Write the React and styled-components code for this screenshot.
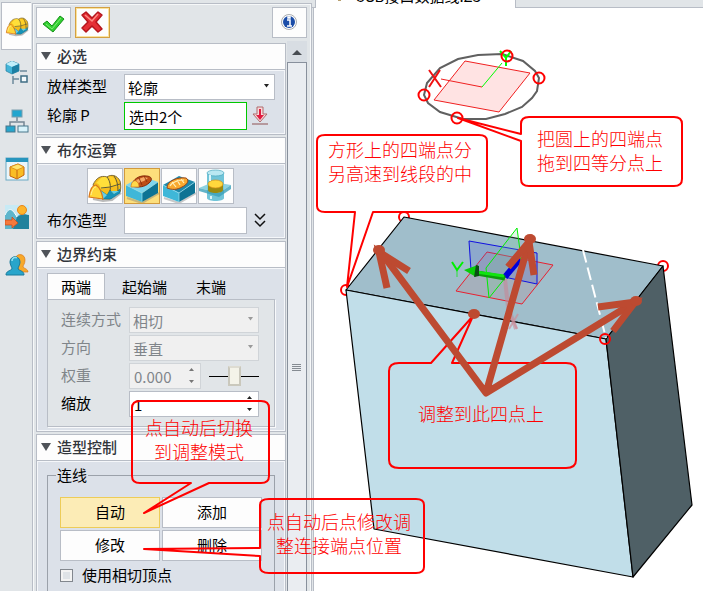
import React, { useState } from "react";
import styled, { createGlobalStyle, css } from "styled-components";

const colors = {
  chrome: "#e1e5e8",
  panel: "#dce1e9",
  line: "#b8bdc6",
  white: "#fdfdfd",
  red: "#ff0000",
  arrow: "#bd4a31",
};

const GlobalStyle = createGlobalStyle`
  * {
    box-sizing: border-box;
  }

  body {
    margin: 0;
    background: #ffffff;
    overflow: hidden;
  }

  body, button, input, select {
    font-family: "Noto Sans CJK SC", "Noto Sans", sans-serif;
    font-size: 15px;
    color: #000000;
  }

  button {
    padding: 0;
    cursor: pointer;
  }
`;

const Page = styled.div`
  position: relative;
  display: flex;
  height: 100vh;
  overflow: hidden;
  background: ${colors.chrome};
`;

const SideBar = styled.nav`
  flex: 0 0 32px;
  display: flex;
  flex-direction: column;
  padding: 2px 1px 0 1px;
`;

const SideTab = styled.button`
  height: 48px;
  padding-bottom: 2px;
  display: flex;
  align-items: center;
  justify-content: center;
  border: 1px solid ${({ $active }) => ($active ? colors.line : "transparent")};
  border-right: none;
  background: ${({ $active }) => ($active ? colors.white : "transparent")};
`;

const Panel = styled.section`
  flex: 0 0 280px;
  display: flex;
  flex-direction: column;
  margin-top: 3px;
  padding: 3px 4px 0 3px;
  border: 1px solid ${colors.line};
  border-bottom: none;
  box-shadow: inset 1px 1px 0 #f6f8f9, inset -1px 0 0 #f6f8f9;
`;

const PanelHeader = styled.header`
  display: flex;
  gap: 4px;
`;

const HeaderButton = styled.button`
  width: 35px;
  height: 31px;
  border: 1px solid ${({ $focused }) => ($focused ? "#d3a044" : colors.line)};
  background: ${colors.white};
  box-shadow: ${({ $focused }) => ($focused ? "inset 0 0 0 1px #fbe39b" : "none")};

  &:last-child {
    margin-left: auto;
  }

  svg {
    display: block;
  }
`;

const PanelBody = styled.div`
  flex: 1;
  display: flex;
  gap: 1px;
  margin-top: 3px;
  min-height: 0;
`;

const SectionList = styled.div`
  flex: 1;
  display: flex;
  flex-direction: column;
  gap: 2px;
  padding-top: 2px;
`;

const ScrollBar = styled.div`
  flex: 0 0 20px;
  display: flex;
  flex-direction: column;
  background: #d8dde3;
`;

const ScrollArrow = styled.button`
  display: flex;
  align-items: center;
  justify-content: center;
  height: 21px;
  border: none;
  background: transparent;
`;

const ScrollThumb = styled.div`
  flex: 1;
  padding: 301px 5px 0 4px;
  border: 1px solid #88909c;
  border-bottom: none;
  background: #eaedf1;
`;

const Grip = styled.div`
  height: 8px;
  background: repeating-linear-gradient(#858b92 0 1px, transparent 1px 2px);
`;

const SectionBox = styled.section`
  flex: none;
  border: 1px solid ${colors.line};
`;

const SectionTitle = styled.h2`
  display: flex;
  align-items: center;
  gap: 6px;
  height: 26px;
  margin: 0;
  padding: 0 0 2px 4px;
  border-bottom: 1px solid ${colors.line};
  background: ${colors.white};
  color: #32363c;
  font-size: 15px;
  font-weight: 500;
  line-height: 23px;
`;

const SectionBody = styled.div`
  display: flex;
  flex-direction: column;
  gap: ${({ $gap }) => $gap || 0}px;
  padding: 3px 9px;
  border: 1px solid #f5f7fa;
  background: ${colors.panel};
`;

const Row = styled.div`
  display: grid;
  grid-template-columns: ${({ $label }) => $label}px auto 1fr;
  align-items: center;
  line-height: 24px;
  color: ${({ $muted }) => ($muted ? "#80858a" : "#000000")};

  label {
    padding-bottom: 2px;
  }
`;

const Field = styled.span`
  position: relative;
  display: block;
  width: ${({ $width }) => $width}px;

  > svg {
    position: absolute;
    top: 0;
    right: 5px;
    height: 100%;
    pointer-events: none;
  }
`;

const control = css`
  display: block;
  width: 100%;
  height: ${({ $height }) => $height || 26}px;
  margin: 0;
  padding: 0 3px;
  border: 1px solid ${colors.line};
  border-radius: 0;
  outline: none;
  background: #ffffff;
  appearance: none;

  &:disabled {
    opacity: 1;
    color: #80858a;
    border-color: #d0d4d8;
    background: #f0f0f0;
  }
`;

const Select = styled.select`
  ${control}
`;

const TextInput = styled.input`
  ${control}
  border-color: ${({ $picked }) => ($picked ? "#00c800" : colors.line)};
  padding: 0 4px;
`;

const PlainButton = styled.button`
  display: flex;
  align-items: center;
  justify-content: center;
  width: 26px;
  height: 26px;
  border: none;
  background: transparent;
`;

const ShapeButtons = styled.div`
  display: flex;
  gap: 1px;
  padding-left: 40px;
`;

const ShapeButton = styled.button`
  width: 36px;
  height: 36px;
  border: 1px solid ${({ $active }) => ($active ? "#d19a3e" : colors.line)};
  background: ${({ $active }) => ($active ? "#fddf7c" : colors.white)};

  svg {
    display: block;
  }
`;

const Tabs = styled.div`
  display: flex;
  align-items: flex-end;
  height: 27px;
`;

const Tab = styled.button`
  height: 27px;
  margin-bottom: ${({ $active }) => ($active ? -1 : 0)}px;
  padding: ${({ $active }) => ($active ? "0 13px" : "3px 0 0 17px")};
  margin-right: ${({ $active }) => ($active ? 0 : 12)}px;
  border: ${({ $active }) => ($active ? `1px solid ${colors.line}` : "none")};
  border-bottom: none;
  background: ${({ $active }) => ($active ? colors.white : "transparent")};
  line-height: 24px;
`;

const TabPanel = styled.div`
  display: flex;
  flex-direction: column;
  gap: 2px;
  height: 128px;
  padding: 7px 12px 0 13px;
  border: 1px solid ${colors.line};
  background: ${colors.chrome};
  box-shadow: 1px 1px 0 #f8f9fb;
`;

const Slider = styled.input`
  width: 50px;
  height: 22px;
  margin: 0 0 0 8px;
  appearance: none;
  background: linear-gradient(#000000, #000000) center / 100% 1px no-repeat;

  &::-webkit-slider-thumb {
    appearance: none;
    width: 13px;
    height: 20px;
    border: 2px solid #cac8bc;
    border-top-color: #dedcd2;
    background: #f4f3e9;
  }
`;

const Group = styled.fieldset`
  min-width: 0;
  height: 150px;
  margin: 0;
  padding: 12px 12px 0;
  border: 1px solid #9ba1aa;

  legend {
    margin-left: -4px;
    padding: 0 1px;
    line-height: 20px;
  }
`;

const GroupButtons = styled.div`
  display: grid;
  grid-template-columns: 1fr 1fr;
  gap: 2px;
`;

const ActionButton = styled.button`
  height: 31px;
  padding-bottom: 2px;
  border: 1px solid ${({ $active }) => ($active ? "#edcc58" : colors.line)};
  background: ${({ $active }) => ($active ? "#fcecb6" : colors.white)};
`;

const CheckLabel = styled.label`
  display: flex;
  align-items: center;
  gap: 9px;
  margin-top: 3px;
  line-height: 22px;
`;

const CheckBox = styled.input`
  width: 13px;
  height: 13px;
  margin: 0;
  appearance: none;
  border: 1px solid #82878e;
  background: #dfe3e7;
  box-shadow: inset 0 0 0 2px #f3f3f3;
`;

const Viewport = styled.main`
  flex: 1;
  min-width: 0;
  display: flex;
  flex-direction: column;
`;

const FileTabs = styled.div`
  display: flex;
  height: 8px;
  padding-left: 3px;
  border-bottom: 1px solid ${colors.line};
`;

const FileTab = styled.div`
  display: flex;
  align-items: flex-end;
  gap: 14px;
  width: 201px;
  height: 8px;
  padding: 0 0 4px 22px;
  overflow: hidden;
  border: 1px solid ${colors.line};
  border-width: 0 1px;
  background: #ffffff;
  line-height: 16px;

  i {
    width: 3px;
    height: 7px;
    border-bottom: 3px solid #ffffff;
    background: #b8a070;
  }
`;

const Canvas = styled.div`
  flex: 1;
  margin-left: 1px;
  border-left: 1px solid ${colors.line};
  background: #ffffff;
`;

const Overlay = styled.svg`
  position: absolute;
  top: 0;
  left: 0;
  width: 703px;
  height: 591px;
  pointer-events: none;
`;

const Note = styled.p`
  position: absolute;
  top: ${({ $top }) => $top}px;
  left: ${({ $left }) => $left}px;
  margin: 0;
  color: ${colors.red};
  font-size: 18px;
  font-weight: 300;
  line-height: 24px;
  text-align: center;
  white-space: pre;
  pointer-events: none;
`;

const LoftShape = () => (
  <>
    <path d="M6 31l10 2 9-1 9-7" fill="none" stroke="#777777" strokeWidth="2" opacity=".5" />
    <path d="M6 17C9 10 14 7 20 9c4-3 10-2 13 4 1 4 1 8 0 11l-10 7h-8z" fill="#f5bd1c" stroke="#7d6a35" />
    <path d="M12 12c3-4 8-4 10 0l1 7-9 2c-1-4-3-6-5-6z" fill="#ffdf3a" />
    <path d="M22 9c4-1 7 2 8 9l-6 1c0-4-1-8-2-10z" fill="#ffd028" />
    <path d="M15 31l-2-9 7 5 3-5 4 4 6-5v4l-9 6z" fill="#1692b8" stroke="#0f6a88" strokeWidth=".5" />
    <path d="M14 23l6 4-4 4zM24 23l3 3 5-3" fill="#66cfe6" />
    <path d="M14 20l9-1 10-3M20 9c3 4 4 9 3 14M27 8c3 4 4 9 4 15" fill="none" stroke="#5d5b3a" />
    <path d="M2 29C3 22 5 17 9 17c3 2 6 8 7 14z" fill="#ffd638" stroke="#d9761c" strokeWidth="1.200" />
    <path d="M4 27c1-5 3-8 5-8" fill="none" stroke="#fff2a0" />
  </>
);

const BlockShape = ({ cut }) => (
  <>
    <path d="M3 30l15 5 17-10" fill="none" stroke="#777777" strokeWidth="2" opacity=".4" />
    <path d="M2 17L18 8l16 6-16 11z" fill={cut ? "#1d89ab" : "#7fd5ec"} />
    <path d="M2 17l16 8v9L2 28z" fill="#3fb7d8" />
    <path d="M18 25l16-11v11l-16 9z" fill="#0d7394" />
    <path d="M2 17l16 8 16-11M18 25v9" fill="none" stroke="#9be2f2" strokeWidth=".7" />
    {cut ? (
      <>
        <path d="M6 20C6 13 16 9 25 10c4 2 1 7-4 9-5 3-10 3-15 1z" fill="#f9a92f" stroke="#9c4517" />
        <path d="M9 18c2-4 9-6 14-6M11 14l4 5M16 12l3 5M20 11l3 4" fill="none" stroke="#fff0b8" strokeWidth="1.200" />
      </>
    ) : (
      <>
        <path d="M8 18C8 12 15 7 22 8c6 0 7 4 3 7-4 4-11 5-17 3z" fill="#bd4f18" stroke="#84290a" />
        <path d="M12 12l8-3 4 1-4 3-6 2z" fill="#f5a864" />
        <path d="M15 10l3 7M20 8l3 6" stroke="#84290a" strokeWidth=".8" />
        <path d="M7 19c0-5 3-7 5-6 2 1 3 3 3 6z" fill="#ffd94a" stroke="#d97818" strokeWidth=".7" />
      </>
    )}
  </>
);

const IntersectShape = () => (
  <>
    <path d="M9 5v25c0 4 17 4 17 0V5z" fill="#70c4d8" />
    <ellipse cx="17.500" cy="5" rx="8.500" ry="3" fill="#b9e8f2" stroke="#4ba7bf" strokeWidth=".7" />
    <path d="M1 20l14-6 18 3-12 8z" fill="#79cadb" opacity=".85" />
    <path d="M1 20l20 5v4L1 23zM21 25l12-8v4l-12 8z" fill="#3ba0ba" opacity=".8" />
    <path d="M10 16v6c0 4 15 4 15 0v-6z" fill="#9a8a10" />
    <ellipse cx="17.500" cy="16" rx="7.500" ry="4" fill="#ffd83c" stroke="#d78d18" strokeWidth=".7" />
    <path d="M12 7v6M13 28v3" stroke="#dff6fa" strokeWidth="2" />
  </>
);

const shapes = [
  { name: "基体", icon: <LoftShape /> },
  { name: "加运算", icon: <BlockShape /> },
  { name: "减运算", icon: <BlockShape cut /> },
  { name: "交运算", icon: <IntersectShape /> },
];

const sideTabs = [
  { name: "放样", icon: <g transform="scale(.68)"><LoftShape /></g> },
  {
    name: "历史",
    icon: (
      <>
        <path d="M1 3l6-3 7 3v7l-7 3-6-3z" fill="#42b4d8" stroke="#267e9e" strokeWidth=".7" />
        <path d="M1 3l6 3 7-3-7-3z" fill="#bfeefa" />
        <path d="M7 6l7-3v7l-7 3z" fill="#1c7fa3" />
        <path d="M15 10h7M8 15v8M8 18h6" fill="none" stroke="#6d8b9c" strokeWidth="1.500" />
        <rect x="16" y="15" width="6" height="6" fill="#f4fafc" stroke="#3f6d84" strokeWidth="1.500" />
      </>
    ),
  },
  {
    name: "装配",
    icon: (
      <>
        <path d="M12 8v4M5 17v-4h14v4" fill="none" stroke="#758794" strokeWidth="1.500" />
        <rect x="7" y="1" width="10" height="7" fill="#22a5ce" stroke="#7d9fae" />
        <rect x="1" y="17" width="9" height="6" fill="#27a5cc" stroke="#48778a" />
        <rect x="13" y="17" width="10" height="6" fill="#d8f3fb" stroke="#48778a" />
      </>
    ),
  },
  {
    name: "视图",
    icon: (
      <>
        <rect x="1" y="1" width="22" height="22" fill="#eaf5fa" stroke="#6aaac4" />
        <path d="M1 1h22v4H1z" fill="#2795bd" />
        <path d="M5 10l8-3 6 3v8l-7 4-7-3z" fill="#f9bd24" stroke="#c5650f" />
        <path d="M5 10l7 3 7-3-6-3z" fill="#ffe56d" stroke="#d88a18" strokeWidth=".8" />
        <path d="M12 13v8" stroke="#c5650f" />
      </>
    ),
  },
  {
    name: "视觉",
    icon: (
      <>
        <rect width="24" height="24" fill="#c7eaf5" />
        <path d="M0 10c4-8 7-7 12 2 3-4 7-4 12-1v13H0z" fill="#5db5cc" />
        <path d="M12 12c4-3 8-3 12-2v14H8z" fill="#21829d" />
        <path d="M0 10c4-8 7-7 12 2" fill="none" stroke="#ffffff" />
        <circle cx="17" cy="5" r="4.500" fill="#fdb52b" stroke="#e9831b" />
        <path d="M0 15h7v-3l6 6-6 5v-3H0z" fill="#f5793c" stroke="#c94912" strokeWidth=".7" />
      </>
    ),
  },
  {
    name: "角色",
    icon: (
      <>
        <path d="M11 4c2-4 9-3 9 3 0 4-2 5-2 7 2 2 5 2 5 5h-9z" fill="#f7a92b" stroke="#db791b" strokeWidth=".7" />
        <path d="M5 9c0-7 10-7 10 0 0 3-2 5-2 7 2 2 6 2 6 6H1c0-4 4-4 6-6 0-2-2-4-2-7z" fill="#28a5cb" stroke="#187a9b" />
        <path d="M7 8c0-4 4-4 5-3" fill="none" stroke="#8fe0f1" strokeWidth="1.500" />
      </>
    ),
  },
];

const Caret = ({ faded }) => (
  <svg width="7" viewBox="0 0 7 26">
    <path d="M1 10h5l-2.500 3.500z" fill={faded ? "#9a9a9a" : "#222222"} />
  </svg>
);

const Spin = ({ faded }) => (
  <svg width="9" viewBox="0 0 9 26">
    <path d="M2 8l2.500-3L7 8zM2 17h5l-2.500 3z" fill={faded ? "#777777" : "#222222"} />
  </svg>
);

const Section = ({ title, gap, children }) => (
  <SectionBox>
    <SectionTitle>
      <svg width="10" height="8" viewBox="0 0 10 8">
        <path d="M0 0h10L5 8z" fill="#4e5258" />
      </svg>
      {title}
    </SectionTitle>
    <SectionBody $gap={gap}>{children}</SectionBody>
  </SectionBox>
);

const points = [[424, 95], [507, 56], [539, 78], [457, 118]];
const corners = [[404, 217], [346, 290], [663, 266]];
const targets = [[379, 250], [530, 239], [474, 314], [636, 301]];

const Scene = () => (
  <Overlay viewBox="0 0 703 591">
    <path
      d="M424 95L427 83 440 68 458 59 478 55 502 54 523 61 535 71 539 78 537 91 532 98 522 107 505 114 486 119 463 119 440 112 428 103z"
      fill="none"
      stroke="#606060"
      strokeWidth="2"
    />
    <path d="M465 61L530 73 499 112 434 100z" fill="#ffe3e3" stroke="#f02020" />
    <path d="M441 79l41 8" stroke="#f02020" />
    <path d="M482 87l20-24" stroke="#00ff00" />
    <path d="M429 70l12 17M440 70l-11 17" stroke="#f01010" strokeWidth="2" />
    <path d="M500 51l6 7 5-7M506 58v8" fill="none" stroke="#00ff00" strokeWidth="2" />
    {points.map(([x, y]) => (
      <circle key={x} cx={x} cy={y} r="5.500" fill="none" stroke={colors.red} strokeWidth="2" />
    ))}

    {corners.map(([x, y]) => (
      <circle key={x} cx={x} cy={y} r="5" fill="none" stroke={colors.red} strokeWidth="2" />
    ))}
    <g stroke="#000000" strokeWidth="1.200" strokeLinejoin="round">
      <path d="M404 217L663 266 606 339 346 290z" fill="#a0becb" />
      <path d="M346 290L606 339 633 577 374 529z" fill="#c1dee9" />
      <path d="M606 339L663 266 692 505 633 577z" fill="#4f6066" />
    </g>
    <path d="M583 250l23 88" stroke="#ffffff" strokeWidth="2" strokeDasharray="13 5" />
    <circle cx="605" cy="339" r="5" fill="none" stroke={colors.red} strokeWidth="2" />

    <path d="M487 252l66 13-31 39-66-13z" fill="#b4868e" fillOpacity=".25" stroke="#e82030" />
    <path d="M469 241l68 12v31l-66-14z" fill="#4054d0" fillOpacity=".2" stroke="#1010e0" />
    <path d="M517 228l-31 40 3 30 32-40z" fill="#70d090" fillOpacity=".2" stroke="#00ee00" />
    <path d="M505 279l3 28 8 22" fill="none" stroke="#c98593" strokeWidth="4" opacity=".55" />
    <path d="M510 315l7 14M518 314l-9 15" stroke="#cc8f9b" strokeWidth="2" opacity=".7" />
    <path d="M505 277l15-18" stroke="#0000dd" strokeWidth="6" />
    <path d="M505 278l-28-5" stroke="#0b9b0b" strokeWidth="5" />
    <path d="M504 276l-28-4" stroke="#10e510" strokeWidth="3" />
    <path d="M464 270l14-5-2 12z" fill="#08cc08" />
    <path d="M476 265l-2 12 5-1v-10z" fill="#0b4f14" />
    <path d="M452 262l5 8 6-8" fill="none" stroke="#00f000" strokeWidth="2" />
    <path d="M457 270v7" stroke="#00f000" strokeWidth="2" opacity=".35" />
  </Overlay>
);

const Annotations = () => (
  <Overlay viewBox="0 0 703 591" fill="none">
    <g stroke={colors.red} strokeWidth="2" strokeLinejoin="round">
      <path d="M325 135H479Q487 135 487 141V206Q487 212 479 212H373L347 287 355 212H325Q317 212 317 206V141Q317 135 325 135z" />
      <path d="M529 117H674Q682 117 682 124V179Q682 186 674 186H529Q521 186 521 179V141L458 118 521 134V124Q521 117 529 117z" />
      <path d="M140 401H261Q269 401 269 408V476Q269 483 261 483H209L144 513 191 483H140Q132 483 132 476V408Q132 401 140 401z" />
      <path d="M269 499H416Q424 499 424 505V567Q424 573 416 573H269Q260 573 260 567V556L144 549 260 548V505Q260 499 269 499z" />
      <path d="M399 363H431L473 316 452 363H566Q576 363 576 371V460Q576 468 566 468H399Q389 468 389 460V371Q389 363 399 363z" />
    </g>
    <g stroke={colors.arrow} strokeWidth="7">
      <path d="M380 251L486 393 529 242M486 393L635 302" strokeLinejoin="round" />
      <path d="M409 271L379 252 387 288M508 267L529 242 534 275M598 307L635 302 613 331" />
    </g>
    {targets.map(([x, y]) => (
      <ellipse key={x} cx={x} cy={y} rx="6" ry="5" fill={colors.arrow} />
    ))}
  </Overlay>
);

const notes = [
  { left: 328, top: 137, text: "方形上的四端点分\n另高速到线段的中" },
  { left: 537, top: 126, text: "把圆上的四端点\n拖到四等分点上" },
  { left: 145, top: 415, text: "点自动后切换\n到调整模式" },
  { left: 267, top: 509, text: "点自动后点修改调\n整连接端点位置" },
  { left: 418, top: 401, text: "调整到此四点上" },
];

const App = () => {
  const [shape, setShape] = useState("加运算");
  const [tab, setTab] = useState("两端");
  const [mode, setMode] = useState("自动");

  return (
    <Page>
      <GlobalStyle />
      <SideBar>
        {sideTabs.map((item, index) => (
          <SideTab key={item.name} aria-label={item.name} $active={index === 0}>
            <svg width="24" height="24" viewBox="0 0 24 24">{item.icon}</svg>
          </SideTab>
        ))}
      </SideBar>

      <Panel>
        <PanelHeader>
          <HeaderButton aria-label="确定">
            <svg width="33" height="29" viewBox="1 1 33 29">
              <path d="M7 17l4-3 5 5 8-10 4 3-11 13z" fill="#32cf32" stroke="#159117" strokeLinejoin="round" />
              <path d="M10 17l6 5 9-11" fill="none" stroke="#7cf070" />
            </svg>
          </HeaderButton>
          <HeaderButton aria-label="取消" $focused>
            <svg width="33" height="29" viewBox="1 1 33 29">
              <path
                d="M7 8l4-3 6 6 6-6 4 3-6 7 6 7-4 3-6-6-6 6-4-4 6-6z"
                fill="#e52f35"
                stroke="#b5151c"
                strokeWidth="1.500"
                strokeLinejoin="round"
              />
              <path d="M10 8l7 6 6-7" fill="none" stroke="#ff8a83" strokeWidth="1.500" />
            </svg>
          </HeaderButton>
          <HeaderButton aria-label="信息">
            <svg width="33" height="29" viewBox="0 0 33 29">
              <circle cx="16" cy="14" r="7.500" fill="#ffffff" stroke="#a9acb0" />
              <circle cx="16" cy="14" r="6" fill="#1b4da8" />
              <path d="M14 12h3v6M14 18h5M15 9h2v1h-2z" fill="none" stroke="#ffffff" strokeWidth="1.500" />
            </svg>
          </HeaderButton>
        </PanelHeader>

        <PanelBody>
          <SectionList>
            <Section title="必选" gap={2}>
              <Row $label={77}>
                <label htmlFor="type">放样类型</label>
                <Field $width={151}>
                  <Select id="type"><option>轮廓</option></Select>
                  <Caret />
                </Field>
              </Row>
              <Row $label={77}>
                <label htmlFor="profile">轮廓 P</label>
                <Field $width={123}>
                  <TextInput id="profile" defaultValue="选中2个" $height={28} $picked />
                </Field>
                <PlainButton aria-label="展开列表">
                  <svg width="18" height="20" viewBox="0 0 18 20">
                    <path d="M6 1h6v7h4l-7 8-7-8h4z" fill="#f7d9da" stroke="#b06a6c" />
                    <path d="M8 3h2v6h3l-4 5-4-5h3z" fill="#e01c40" />
                    <path d="M1 18h16" stroke="#a98084" strokeWidth="1.500" />
                  </svg>
                </PlainButton>
              </Row>
            </Section>

            <Section title="布尔运算" gap={3}>
              <ShapeButtons>
                {shapes.map((item) => (
                  <ShapeButton
                    key={item.name}
                    aria-label={item.name}
                    $active={shape === item.name}
                    onClick={() => setShape(item.name)}
                  >
                    <svg width="34" height="34" viewBox="1 1 34 34">{item.icon}</svg>
                  </ShapeButton>
                ))}
              </ShapeButtons>
              <Row $label={77}>
                <label htmlFor="boolean">布尔造型</label>
                <Field $width={123}>
                  <TextInput id="boolean" $height={27} />
                </Field>
                <PlainButton aria-label="更多">
                  <svg width="12" height="15" viewBox="0 0 12 15">
                    <path d="M1 1l5 5 5-5M1 8l5 5 5-5" fill="none" stroke="#111111" strokeWidth="1.500" />
                  </svg>
                </PlainButton>
              </Row>
            </Section>

            <Section title="边界约束">
              <Tabs role="tablist">
                {["两端", "起始端", "末端"].map((name) => (
                  <Tab
                    key={name}
                    role="tab"
                    aria-selected={tab === name}
                    $active={tab === name}
                    onClick={() => setTab(name)}
                  >
                    {name}
                  </Tab>
                ))}
              </Tabs>
              <TabPanel role="tabpanel">
                <Row $label={68} $muted>
                  <label htmlFor="continuity">连续方式</label>
                  <Field $width={130}>
                    <Select id="continuity" disabled><option>相切</option></Select>
                    <Caret faded />
                  </Field>
                </Row>
                <Row $label={68} $muted>
                  <label htmlFor="direction">方向</label>
                  <Field $width={130}>
                    <Select id="direction" disabled><option>垂直</option></Select>
                    <Caret faded />
                  </Field>
                </Row>
                <Row $label={68} $muted>
                  <label htmlFor="weight">权重</label>
                  <Field $width={72}>
                    <TextInput id="weight" defaultValue="0.000" disabled />
                    <Spin faded />
                  </Field>
                  <Slider type="range" aria-label="权重" defaultValue="50" />
                </Row>
                <Row $label={68}>
                  <label htmlFor="scale">缩放</label>
                  <Field $width={130}>
                    <TextInput id="scale" defaultValue="1" />
                    <Spin />
                  </Field>
                </Row>
              </TabPanel>
            </Section>

            <Section title="造型控制">
              <Group>
                <legend>连线</legend>
                <GroupButtons>
                  {["自动", "添加", "修改", "删除"].map((name) => (
                    <ActionButton key={name} $active={mode === name} onClick={() => setMode(name)}>
                      {name}
                    </ActionButton>
                  ))}
                </GroupButtons>
                <CheckLabel>
                  <CheckBox type="checkbox" />
                  使用相切顶点
                </CheckLabel>
              </Group>
            </Section>
          </SectionList>

          <ScrollBar>
            <ScrollArrow aria-label="向上滚动">
              <svg width="10" height="6" viewBox="0 0 10 6">
                <path d="M0 6l5-5 5 5z" fill="#484c52" />
              </svg>
            </ScrollArrow>
            <ScrollThumb>
              <Grip />
            </ScrollThumb>
          </ScrollBar>
        </PanelBody>
      </Panel>

      <Viewport>
        <FileTabs>
          <FileTab>
            <i />
            <span>USB接口数据线.Z3</span>
          </FileTab>
        </FileTabs>
        <Canvas />
      </Viewport>

      <Scene />
      <Annotations />
      {notes.map((note) => (
        <Note key={note.text} $left={note.left} $top={note.top}>{note.text}</Note>
      ))}
    </Page>
  );
};

export default App;
